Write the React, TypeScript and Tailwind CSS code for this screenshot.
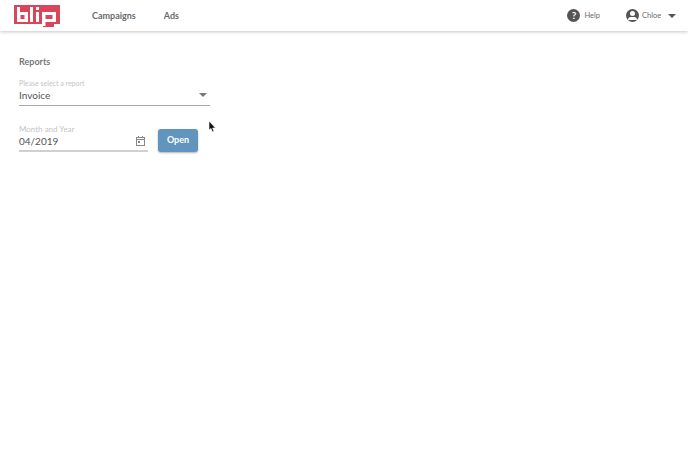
const font = "font-['Lato','Noto_Sans',sans-serif]";

function Logo() {
  return (
    <svg width="46" height="22" viewBox="0 0 46 22" className="mt-[1px] block">
      <path d="M0 0H46V19H40V22H29V19H0Z" fill="#d9465c" />
      <path d="M3 2H6V7H14V17H3ZM6.5 10V14H10.5V10Z" fill="#fff" fillRule="evenodd" />
      <rect x="16" y="2" width="3" height="15" fill="#fff" />
      <rect x="22" y="2" width="3" height="3" fill="#fff" />
      <rect x="22" y="7" width="3" height="10" fill="#fff" />
      <path d="M28 7H42V17H31.5V21H28ZM31.5 10V14H38.5V10Z" fill="#fff" fillRule="evenodd" />
    </svg>
  );
}

function Caret({ className }: { className: string }) {
  return <span className={`block h-0 w-0 border-x-4 border-t-4 border-x-transparent ${className}`} />;
}

export default function App() {
  return (
    <div className={`${font} relative h-[464px] w-[688px] overflow-hidden bg-white`}>
      <header className="flex h-[31px] items-center bg-white pl-[14px] pr-[12px] shadow-[0_1px_3px_rgba(0,0,0,0.22)]">
        <Logo />
        <nav className="ml-[32px] flex items-center gap-[28px] text-[9px] font-bold text-[#6b6b6b]">
          <span>Campaigns</span>
          <span>Ads</span>
        </nav>
        <div className="ml-auto flex items-center text-[7.5px] text-[#6b6b6b]">
          <span className="flex h-[13px] w-[13px] items-center justify-center rounded-full bg-[#555] text-[10px] font-bold text-white">
            ?
          </span>
          <span className="ml-[4px]">Help</span>
          <span className="relative ml-[26px] h-[13px] w-[13px] overflow-hidden rounded-full bg-[#555]">
            <span className="absolute left-[4px] top-[2px] h-[5px] w-[5px] rounded-full bg-white" />
            <span className="absolute left-[2px] top-[8px] h-[3px] w-[9px] rounded-t-full bg-white" />
          </span>
          <span className="ml-[3px] w-[21px]">Chloe</span>
          <Caret className="ml-[5px] border-t-[#555]" />
        </div>
      </header>

      <main className="pl-[19px] pt-[25px]">
        <h1 className="text-[9px] leading-[12px] font-bold text-[#777]">Reports</h1>

        <div className="mt-[11px] w-[191px] border-b border-[#a8a8a8] pb-[3px]">
          <div className="text-[7px] leading-[9px] text-[#c4c4c4]">Please select a report</div>
          <div className="flex items-center justify-between pr-[3px] text-[10px] leading-[14px] text-[#555]">
            <span>Invoice</span>
            <Caret className="border-t-[#777]" />
          </div>
        </div>

        <div className="mt-[18px] flex items-end">
          <div className="w-[129px] border-b-2 border-[#d0d0d0] pb-[2px]">
            <div className="text-[8px] leading-[10px] text-[#c4c4c4]">Month and Year</div>
            <div className="flex items-center justify-between pr-[3px] text-[10px] leading-[14px] text-[#555]">
              <span>04/2019</span>
              <svg width="9" height="10" viewBox="0 0 9 10" fill="none" stroke="#888">
                <rect x="0.5" y="1.5" width="8" height="8" />
                <path d="M0.5 3.5H8.5M2.5 0V2M6.5 0V2" />
                <rect x="2" y="5" width="2" height="2" fill="#888" stroke="none" />
              </svg>
            </div>
          </div>
          <button className="ml-[10px] h-[23px] w-[40px] rounded-[3px] bg-[#6195bd] pb-[2px] text-[9px] font-bold text-white shadow-[0_1px_2px_rgba(0,0,0,0.3)]">
            Open
          </button>
        </div>
      </main>

      <svg width="9" height="13" viewBox="0 0 9 13" className="absolute left-[208px] top-[120px]">
        <path d="M1 1V10L3 8.5L4.5 12L6 11.4L4.6 8H7.5Z" fill="#111" stroke="#fff" strokeWidth="0.6" />
      </svg>
    </div>
  );
}
